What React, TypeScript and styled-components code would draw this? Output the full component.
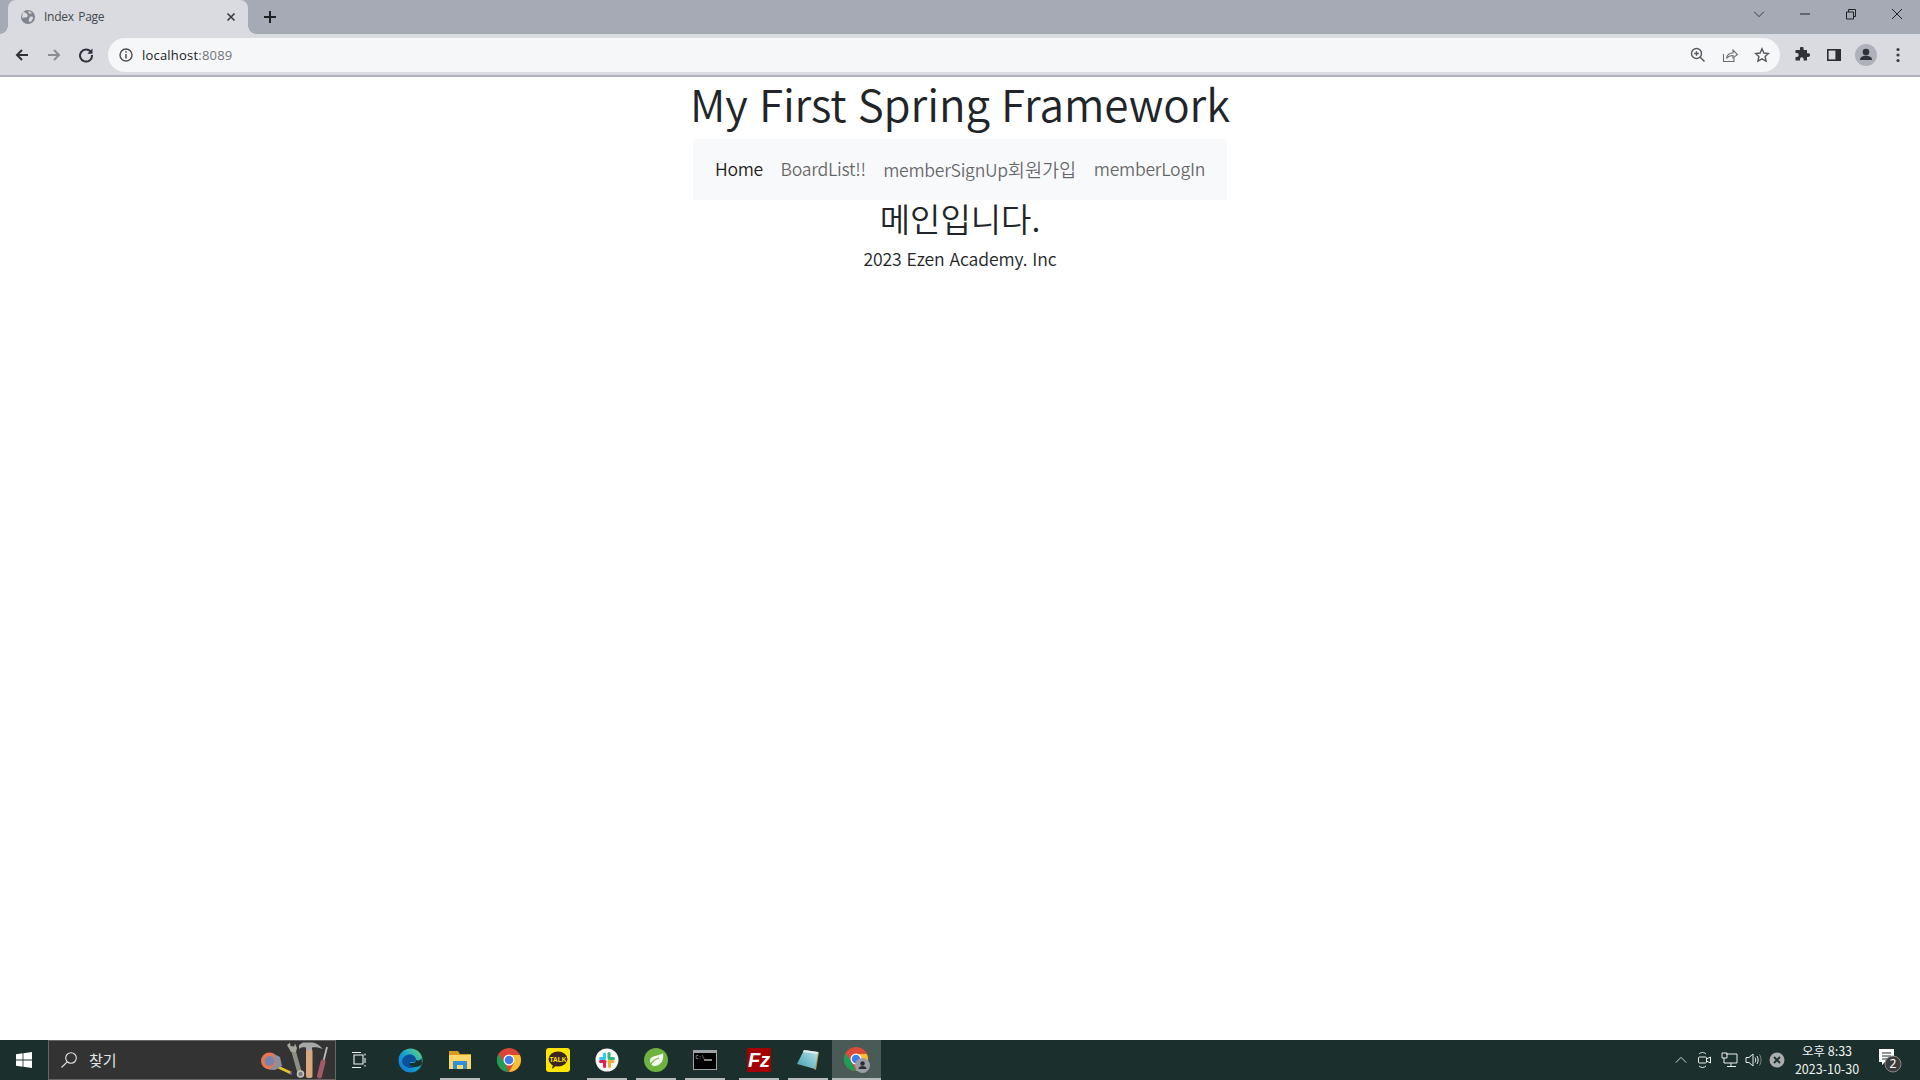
import React from "react";
import styled, { createGlobalStyle } from "styled-components";

const Global = createGlobalStyle`
  html, body { margin: 0; padding: 0; height: 100%; background: #fff; overflow: hidden; }
  #root { height: 100%; }
  * { box-sizing: border-box; }
`;
const UI = `"Open Sans", "Noto Sans CJK KR", sans-serif`;
const PAGE = `"Noto Sans CJK KR", "Noto Sans", sans-serif`;

const Shell = styled.div`display:flex;flex-direction:column;height:1080px;width:1920px;font-family:${UI};`;
const TabStrip = styled.div`display:flex;align-items:stretch;height:34px;background:#a6aab5;padding-left:8px;flex:none;`;
const Tab = styled.div`
  position:relative;width:240px;background:#d9dbe0;border-radius:8px 8px 0 0;display:flex;align-items:center;padding:0 10px 1px 12px;color:#44474c;font-size:12px;
  &::before,&::after{content:"";position:absolute;bottom:0;width:8px;height:8px;background:radial-gradient(circle at var(--cx) 0,transparent 7.5px,#d9dbe0 8px);}
  &::before{left:-8px;--cx:0;}
  &::after{right:-8px;--cx:8px;}
`;
const TabTitle = styled.span`flex:1;margin-left:8px;letter-spacing:-.25px;word-spacing:1.5px;`;
const NewTab = styled.div`width:32px;margin-left:6px;display:flex;align-items:center;justify-content:center;`;
const Spacer = styled.div`flex:1;`;
const WinBtn = styled.div`width:46px;height:28px;display:flex;align-items:center;justify-content:center;`;
const Toolbar = styled.div`display:flex;align-items:center;height:43px;flex:none;background:#d9dbe0;padding:1px 6px 0 6px;border-bottom:2px solid #b2b3ba;`;
const ToolBtn = styled.div`width:32px;height:32px;flex:none;display:flex;align-items:center;justify-content:center;`;
const Omni = styled.div`flex:1;height:34px;margin:0 6px;background:#f6f7f9;border-radius:17px;display:flex;align-items:center;padding:0 2px 0 8px;`;
const Url = styled.div`flex:1;font-size:13px;color:#202124;margin-left:6px;letter-spacing:.2px;`;
const Port = styled.span`color:#70757a;`;
const Page = styled.main`flex:1;background:#fff;display:flex;flex-direction:column;align-items:center;font-family:${PAGE};color:#212529;font-weight:350;`;
const Title = styled.h1`margin:0 0 8.8px;font-size:44px;line-height:52.8px;font-weight:350;white-space:nowrap;letter-spacing:-.1px;word-spacing:1.5px;`;
const Nav = styled.nav`width:534px;height:61.6px;background:#f8f9fa;display:flex;align-items:center;padding:0 13.2px;`;
const NavLink = styled.a<{ $active?: boolean }>`padding:8.8px;font-size:17.6px;line-height:26.4px;white-space:nowrap;letter-spacing:-.3px;color:${p => p.$active ? "rgba(0,0,0,.9)" : "rgba(0,0,0,.6)"};`;
const Hangul = styled.span`font-size:18.6px;letter-spacing:0;`;
const Heading = styled.h3`margin:0 0 8.8px;font-size:33px;line-height:37px;font-weight:350;`;
const Foot = styled.p`margin:0;font-size:17.6px;line-height:26.4px;letter-spacing:-.15px;word-spacing:1.2px;`;

const Taskbar = styled.footer`height:40px;flex:none;background:#1b2f2c;display:flex;align-items:stretch;color:#fff;font-family:"Noto Sans CJK KR",sans-serif;`;
const StartBtn = styled.div`width:48px;display:flex;align-items:center;justify-content:center;`;
const Search = styled.div`width:288px;background:#333;border:1px solid #666;display:flex;align-items:center;padding:0 7px 0 11px;color:#dfe6e6;font-size:15px;`;
const SearchText = styled.span`flex:1;margin-left:11px;padding-bottom:2px;`;
const TaskIcon = styled.div`width:48px;flex:none;margin-right:2px;display:flex;align-items:center;justify-content:center;`;
const AppSlot = styled.div<{ $on?: boolean; $active?: boolean; $gap?: number }>`
  position:relative;width:49px;flex:none;display:flex;align-items:center;justify-content:center;margin-left:${p => p.$gap ?? 0}px;
  background:${p => p.$active ? "#4a5b57" : "transparent"};
  &::after{content:"";display:${p => p.$on ? "block" : "none"};position:absolute;bottom:0;left:${p => p.$active ? 0 : 4.5}px;right:${p => p.$active ? 0 : 4.5}px;height:2px;background:#b4bbb9;}
`;
const Tray = styled.div`margin-left:auto;display:flex;align-items:center;padding-right:5px;`;
const TrayIcon = styled.div`width:24px;display:flex;justify-content:center;align-items:center;`;
const Clock = styled.div`width:76px;font-size:12.5px;line-height:18px;text-align:center;color:#f0f3f2;white-space:nowrap;`;
const Notify = styled.div`width:50px;display:flex;justify-content:center;align-items:center;`;

function Ic({ d, c = "#3c4043", s = 16, w = 2 }: { d: string; c?: string; s?: number; w?: number }) {
  return <svg width={s} height={s} viewBox="0 0 16 16" fill="none" stroke={c} strokeWidth={w}><path d={d} /></svg>;
}

function Chrome({ size = 24 }: { size?: number }) {
  return (
    <svg width={size} height={size} viewBox="0 0 24 24">
      <circle cx="12" cy="12" r="12" fill="#db4437" />
      <path d="M12 7h10.900A12 12 0 0 1 12 24l5-9Z" fill="#fbc02d" />
      <path d="M1.600 6 7.500 15 12 24A12 12 0 0 1 1.600 6Z" fill="#1e9e55" />
      <circle cx="12" cy="12" r="5.500" fill="#fff" />
      <circle cx="12" cy="12" r="4.300" fill="#3f7ee8" />
    </svg>
  );
}

function Tools() {
  return (
    <svg width="68" height="38" viewBox="0 0 68 38">
      <path d="M18 26 31 32" stroke="#e8c22c" strokeWidth="2.600" />
      <path d="M31 30v4" stroke="#5b6aa0" strokeWidth="1.500" />
      <circle cx="9.500" cy="20" r="8.500" fill="#e9764f" />
      <circle cx="9.500" cy="20" r="5" fill="#7684ad" />
      <path d="M12 12 20 16 22 25 15 29 9 28.500 15 24 15 16Z" fill="#8b8f9e" />
      <path d="M33 8 40 33" stroke="#8d8f85" strokeWidth="4.500" />
      <path d="M27 4 30 1.500 30.500 5 34 5.500 35 2.500 37 7 36 11 31 11Z" fill="#a5a79f" />
      <circle cx="40.500" cy="33" r="3" fill="#7f8177" stroke="#c4c5bf" strokeWidth="1.500" />
      <rect x="46" y="8" width="6.500" height="29" rx="2" fill="#d9a77c" />
      <path d="M39 4 43 1.500H52C57 2 60 5 63 8 58 6 55 6 52 6.500V9H46V6.500C43 6 41 6 39 8Z" fill="#a7a9a8" />
      <path d="M67 6 63 22" stroke="#b9bcbc" strokeWidth="1.800" />
      <path d="M63 21 59.500 35" stroke="#a35a62" strokeWidth="5" strokeLinecap="round" />
    </svg>
  );
}

export default function App() {
  return (
    <Shell>
      <Global />
      <TabStrip>
        <Tab>
          <svg width="16" height="16" viewBox="0 0 16 16"><circle cx="8" cy="8" r="7" fill="#80848c" /><path d="M3 3c2 0 3 1 4 2s1 2 0 3-3 0-4 1-1-3 0-6Zm7 5c2-1 3 0 3 1s-2 4-3 4-2-2-1-3 0-1 1-2Zm-1-6 3 2-2 1-2-2Z" fill="#d9dbe0" /></svg>
          <TabTitle>Index Page</TabTitle>
          <Ic d="M4 4l8 8M12 4l-8 8" c="#3c4043" s={14} w={2} />
        </Tab>
        <NewTab><Ic d="M8 2v12M2 8h12" c="#202124" w={2} /></NewTab>
        <Spacer />
        <WinBtn><Ic d="M2.500 5.500 8 11l5.500-5.500" c="#26282c" s={14} w={1} /></WinBtn>
        <WinBtn><Ic d="M3 8h10" c="#202124" w={1} /></WinBtn>
        <WinBtn><Ic d="M3.500 6h7v7h-7ZM5.500 6V3.500h7v7H10.500" c="#202124" w={1} /></WinBtn>
        <WinBtn><Ic d="M3 3l10 10M13 3 3 13" c="#202124" w={1} /></WinBtn>
      </TabStrip>
      <Toolbar>
        <ToolBtn><Ic d="M14 8H3M8 3 3 8l5 5" c="#2f3136" /></ToolBtn>
        <ToolBtn><Ic d="M2 8h11M8 3l5 5-5 5" c="#8a8d93" /></ToolBtn>
        <ToolBtn><svg width="16" height="16" viewBox="0 0 16 16" fill="none" stroke="#2f3136" strokeWidth="2"><path d="M13 5.200A6 6 0 1 0 14 8" /><path d="M14.500 1.500v5.200H9.300Z" fill="#2f3136" stroke="none" /></svg></ToolBtn>
        <Omni>
          <svg width="20" height="20" viewBox="0 0 20 20" fill="none"><circle cx="10" cy="10" r="6" stroke="#4a4d52" strokeWidth="1.400" /><path d="M10 9v4.500M10 6.200v1.600" stroke="#4a4d52" strokeWidth="1.500" /></svg>
          <Url>localhost<Port>:8089</Port></Url>
          <ToolBtn><svg width="16" height="16" viewBox="0 0 16 16" fill="none" stroke="#55585e" strokeWidth="1.400"><circle cx="6.500" cy="6.500" r="5" /><path d="M10.200 10.200 14.500 14.500M6.500 4.200v4.600M4.200 6.500h4.600" /></svg></ToolBtn>
          <ToolBtn><svg width="16" height="16" viewBox="0 0 16 16" fill="none" stroke="#6a6d72" strokeWidth="1.100"><path d="M1.500 7v7.500h10.500V11" /><path d="M4.500 11.500c.5-3.500 3-5.500 6.500-5.500V3l4.500 4.500L11 11V8.500c-2.800 0-5 1-6.500 3Z" /></svg></ToolBtn>
          <ToolBtn><svg width="16" height="16" viewBox="0 0 16 16" fill="none" stroke="#55585e" strokeWidth="1.400"><path d="M8 1.800 9.900 6l4.600.5-3.400 3 1 4.600L8 11.800l-4.100 2.300 1-4.600-3.400-3L6.100 6Z" /></svg></ToolBtn>
        </Omni>
        <ToolBtn><svg width="16" height="16" viewBox="0 0 16 16" fill="#2f3237"><path d="M6 1.500a1.800 1.800 0 0 1 3.600 0V3h3.400v3.200h1.200a1.900 1.900 0 0 1 0 3.800H13v3.500H9.600V12a1.800 1.800 0 0 0-3.600 0v1.500H1.500V10h1.200a2 2 0 0 0 0-4H1.500V3H6Z" /></svg></ToolBtn>
        <ToolBtn><svg width="16" height="16" viewBox="0 0 16 16"><path d="M1 2h14v12H1Z" fill="#2b2e33" /><rect x="2.600" y="3.600" width="6.800" height="8.800" fill="#d9dbe0" /></svg></ToolBtn>
        <ToolBtn><svg width="22" height="22" viewBox="0 0 22 22"><circle cx="11" cy="11" r="11" fill="#aeb1b9" /><circle cx="11" cy="8" r="3.300" fill="#2f3237" /><path d="M5 16c0-3 3-4.300 6-4.300s6 1.300 6 4.300Z" fill="#2f3237" /></svg></ToolBtn>
        <ToolBtn><svg width="16" height="16" viewBox="0 0 16 16" fill="#3a3d42"><circle cx="8" cy="2.500" r="1.600" /><circle cx="8" cy="8" r="1.600" /><circle cx="8" cy="13.500" r="1.600" /></svg></ToolBtn>
      </Toolbar>
      <Page>
        <Title>My First Spring Framework</Title>
        <Nav>
          <NavLink $active>Home</NavLink>
          <NavLink>BoardList!!</NavLink>
          <NavLink>memberSignUp<Hangul>회원가입</Hangul></NavLink>
          <NavLink>memberLogIn</NavLink>
        </Nav>
        <Heading>메인입니다.</Heading>
        <Foot>2023 Ezen Academy. Inc</Foot>
      </Page>
      <Taskbar>
        <StartBtn><svg width="16" height="16" viewBox="0 0 16 16" fill="#fff"><path d="M0 2.300 6.600 1.300v6.200H0ZM7.400 1.200 16 0v7.500H7.400ZM0 8.400h6.600v6.300L0 13.700ZM7.400 8.400H16V16l-8.600-1.200Z" /></svg></StartBtn>
        <Search>
          <svg width="18" height="18" viewBox="0 0 18 18" fill="none" stroke="#e6e6e6" strokeWidth="1.100"><circle cx="11" cy="7" r="5.300" /><path d="M7.200 10.800 1.500 16.500" /></svg>
          <SearchText>찾기</SearchText>
          <Tools />
        </Search>
        <TaskIcon><svg width="18" height="16" viewBox="0 0 18 16" fill="none" stroke="#f2f2f2" strokeWidth="1.100"><path d="M1 .5h9M3 3h9v9H3ZM1 15.500h9M14 1.500v2M14 6v5M14 13v1.500" /></svg></TaskIcon>
        <AppSlot>
          <svg width="25" height="25" viewBox="0 0 25 25">
            <defs><linearGradient id="edgeG" x1="0" y1="1" x2="1" y2="0"><stop offset="0" stopColor="#0c6fd0" /><stop offset=".55" stopColor="#1aa7cf" /><stop offset="1" stopColor="#72d86a" /></linearGradient></defs>
            <circle cx="12.500" cy="12.500" r="12" fill="url(#edgeG)" />
            <path d="M4 13c1-5 5-7 9-6.500 3 .5 5 3 5 5 0 1.500-1 2.500-3 2.500h-3c-1 2 1 4.500 5 5-5 3-13-1-13-6Z" fill="#0b4e9a" />
            <path d="M18 12c0 1.500-1 3-3 3h-3.500c-.2 2 2 4 6 4 3 0 5-1 6.500-3-.2 0 .1-4-.8-6-1 3-3 2.500-5.200 2Z" fill="#1b2f2c" />
          </svg>
        </AppSlot>
        <AppSlot $on>
          <svg width="22" height="18" viewBox="0 0 22 18"><path d="M0 0h9l2 3h11v15H0Z" fill="#d99a1f" /><path d="M0 4h22v14H0Z" fill="#fbd769" /><path d="M4 10h14v8h-4v-4H8v4H4Z" fill="#2f8fd8" /></svg>
        </AppSlot>
        <AppSlot><Chrome /></AppSlot>
        <AppSlot>
          <svg width="24" height="24" viewBox="0 0 24 24"><rect width="24" height="24" rx="3" fill="#ffe600" /><ellipse cx="12" cy="11" rx="9.500" ry="7.500" fill="#3b2720" /><path d="M7 16 6 21l5-4Z" fill="#3b2720" /><text x="12" y="13.500" textAnchor="middle" fontSize="6.500" fontWeight="700" fontFamily="Liberation Sans" fill="#ffe600">TALK</text></svg>
        </AppSlot>
        <AppSlot $on>
          <svg width="24" height="24" viewBox="0 0 24 24"><circle cx="12" cy="12" r="11.500" fill="#f7f7f7" /><g strokeWidth="3" strokeLinecap="round"><path d="M9.500 6v4" stroke="#36c5f0" /><path d="M5.500 10.500h4" stroke="#36c5f0" /><path d="M14 5.500v4.500" stroke="#2eb67d" /><path d="M14.500 10.500h4" stroke="#2eb67d" /><path d="M14.500 14v4.500" stroke="#ecb22e" /><path d="M14 13.500h4" stroke="#ecb22e" /><path d="M9.500 14.500v4" stroke="#e01e5a" /><path d="M5.500 13.500H10" stroke="#e01e5a" /></g></svg>
        </AppSlot>
        <AppSlot $on>
          <svg width="24" height="24" viewBox="0 0 24 24"><circle cx="12" cy="12" r="12" fill="#6db33f" /><path d="M19 5c1 6-1 12-8 13-3 0-5-2-5-5 0-5 6-5 9-6 1.500-.5 3-1 4-2Z" fill="#f4f8ee" /><path d="M6 18c2-5 5-7 9-8" stroke="#6db33f" strokeWidth="1.200" fill="none" /></svg>
        </AppSlot>
        <AppSlot $on>
          <svg width="24" height="20" viewBox="0 0 24 20"><rect width="24" height="20" fill="#9fa3a6" /><rect x="1" y="3" width="22" height="16" fill="#000" /><text x="2.500" y="9" fontSize="5" fontFamily="Liberation Mono" fill="#ccc">C:\</text><path d="M11 10h8" stroke="#ddd" strokeWidth="1.200" /></svg>
        </AppSlot>
        <AppSlot $on $gap={5}>
          <svg width="24" height="24" viewBox="0 0 24 24"><rect width="24" height="24" fill="#a40000" /><text x="12" y="19" textAnchor="middle" fontSize="20" fontWeight="700" fontStyle="italic" fontFamily="Liberation Sans" fill="#fff">Fz</text></svg>
        </AppSlot>
        <AppSlot $on>
          <svg width="24" height="24" viewBox="0 0 24 24">
            <defs><linearGradient id="noteG" x1="0" y1="1" x2="1" y2="0"><stop offset="0" stopColor="#3f9fb0" /><stop offset="1" stopColor="#b9e6ea" /></linearGradient></defs>
            <path d="M23 4 20 22 18 21 21 4Z" fill="#b8975c" />
            <path d="M8 2 22 4 19 21 1 16Z" fill="url(#noteG)" />
            <path d="M8 2 22 4 21.500 6 7 4Z" fill="#e6eaec" />
          </svg>
        </AppSlot>
        <AppSlot $on $active>
          <svg width="26" height="26" viewBox="0 0 26 26"><circle cx="12" cy="12" r="12" fill="#dd4b39" /><path d="M12 7h10.900A12 12 0 0 1 12 24l5-9Z" fill="#fbc02d" /><path d="M1.600 6 7.500 15 12 24A12 12 0 0 1 1.600 6Z" fill="#1e9e55" /><circle cx="12" cy="12" r="5.500" fill="#fff" /><circle cx="12" cy="12" r="4.200" fill="#3f7ee8" /><circle cx="18.500" cy="18.500" r="7.500" fill="#9a9da6" /><circle cx="18.500" cy="16.500" r="2.200" fill="#2a2d31" /><path d="M14.500 22c0-2 2-3 4-3s4 1 4 3Z" fill="#2a2d31" /></svg>
        </AppSlot>
        <Tray>
          <TrayIcon><Ic d="M2 11l6-6 6 6" c="#e8eeec" s={14} w={1} /></TrayIcon>
          <TrayIcon><svg width="16" height="18" viewBox="0 0 16 18" fill="none" stroke="#e8eeec" strokeWidth="1"><path d="M2 3c2-2 5-2 7 0M2 15c2 2 5 2 7 0" /><rect x="1.500" y="6" width="8" height="6" rx="1" /><path d="M9.500 8l4-2v6l-4-2" /></svg></TrayIcon>
          <TrayIcon><svg width="17" height="16" viewBox="0 0 17 16" fill="none" stroke="#e8eeec" strokeWidth="1"><path d="M5 2h11v9H5M1 1h5v5H1ZM3 6v5h2M10 11v3M6 14.500h9" /></svg></TrayIcon>
          <TrayIcon><svg width="17" height="16" viewBox="0 0 17 16" fill="none" stroke="#e8eeec" strokeWidth="1"><path d="M1 5.500h3L8 2v12l-4-3.500H1Z" /><path d="M10 5.500c1 1.500 1 3.500 0 5M12 4c1.500 2.500 1.500 5.500 0 8" /><path d="M14.500 2.500c2 3.500 2 7.500 0 11" stroke="#7f8b88" /></svg></TrayIcon>
          <TrayIcon><svg width="16" height="16" viewBox="0 0 16 16"><circle cx="8" cy="8" r="7.500" fill="#a9adab" /><path d="M5 5l6 6M11 5l-6 6" stroke="#1b2f2c" strokeWidth="1.800" /></svg></TrayIcon>
          <Clock>오후 8:33<br />2023-10-30</Clock>
          <Notify>
            <svg width="26" height="26" viewBox="0 0 26 26"><path d="M2 2h15v13H8l-3 3v-3H2Z" fill="#fff" /><path d="M5 6h9M5 9h9M5 12h6" stroke="#1b2f2c" strokeWidth="1" /><circle cx="16" cy="17" r="8" fill="#3c3c3c" stroke="#888" /><text x="16" y="21" textAnchor="middle" fontSize="12" fontFamily="Noto Sans" fill="#fff">2</text></svg>
          </Notify>
        </Tray>
      </Taskbar>
    </Shell>
  );
}
